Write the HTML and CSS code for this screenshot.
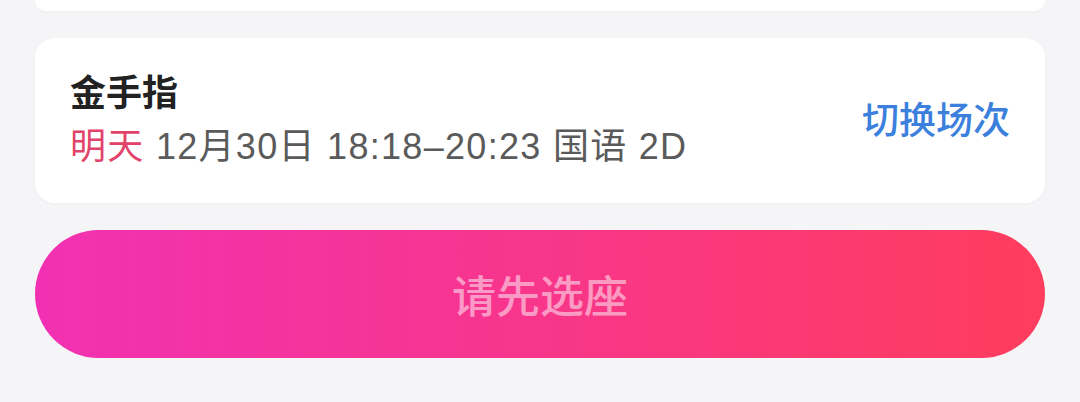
FILE: index.html
```html
<!DOCTYPE html>
<html lang="zh-CN">
<head>
<meta charset="utf-8">
<link rel="stylesheet" href="styles.css">
</head>
<body>
<div class="page">
  <div class="card-top"></div>
  <div class="card show">
    <div class="show-info">
      <div class="title">金手指</div>
      <div class="meta"><span class="day">明天</span> 12月30日 18:18–20:23 国语 2D</div>
    </div>
    <div class="switch">切换场次</div>
  </div>
  <div class="cta">请先选座</div>
</div>
</body>
</html>
```
FILE: styles.css
```css
html, body {
  margin: 0;
  padding: 0;
  background: #f5f5f7;
}
body {
  font-family: "Noto Sans CJK SC", "Noto Sans", sans-serif;
  width: 1080px;
  height: 402px;
  overflow: hidden;
}
.page {
  display: flex;
  flex-direction: column;
  gap: 27px;
  padding: 0 35px;
}
.card-top {
  height: 11px;
  background: #fff;
  border-radius: 0 0 20px 20px;
  box-shadow: 0 1px 3px rgba(0,0,0,0.03);
}
.card {
  background: #fff;
  border-radius: 20px;
  box-shadow: 0 1px 3px rgba(0,0,0,0.03);
}
.show {
  display: flex;
  align-items: center;
  justify-content: space-between;
  height: 165px;
  box-sizing: border-box;
  padding: 0 35px 5px 35px;
}
.show-info {
  display: flex;
  flex-direction: column;
  gap: 5px;
}
.title {
  font-size: 36px;
  font-weight: 700;
  color: #222;
  line-height: 52px;
}
.meta {
  font-family: "Liberation Sans", "Noto Sans CJK SC", sans-serif;
  font-size: 36px;
  letter-spacing: 1.3px;
  color: #5a5a5a;
  line-height: 52px;
}
.day {
  color: #e2436b;
}
.switch {
  font-size: 37px;
  font-weight: 500;
  color: #3b80dc;
  line-height: 50px;
}
.cta {
  height: 128px;
  border-radius: 64px;
  background: linear-gradient(90deg, #f131b2 0%, #f7358f 45%, #ff3d5d 100%);
  display: flex;
  align-items: center;
  justify-content: center;
  color: rgba(255,255,255,0.5);
  font-size: 44px;
  font-weight: 500;
}
```
